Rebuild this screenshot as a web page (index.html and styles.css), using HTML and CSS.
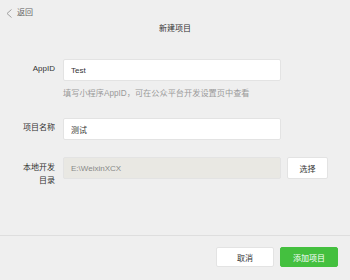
FILE: index.html
```html
<!DOCTYPE html>
<html lang="zh-CN">
<head>
    <meta charset="UTF-8">
    <meta name="viewport" content="width=device-width, initial-scale=1.0">
    <title>新建项目</title>
    <link rel="stylesheet" href="styles.css">
</head>
<body>
    <div class="page">
        <div class="main">
            <a class="back" href="#">
                <svg class="back-icon" width="6" height="9" viewBox="0 0 6 9">
                    <polyline points="5.5,0.5 1,4.5 5.5,8.5" fill="none" stroke="#a0a0a0" stroke-width="1"/>
                </svg>
                <span>返回</span>
            </a>

            <h1>新建项目</h1>

            <form class="form">
                <div class="row">
                    <label>AppID</label>
                    <input type="text" value="Test">
                </div>
                <p class="hint">填写小程序AppID，可在公众平台开发设置页中查看</p>

                <div class="row row-name">
                    <label>项目名称</label>
                    <input type="text" value="测试">
                </div>

                <div class="row row-dir">
                    <label>本地开发<br>目录</label>
                    <input type="text" value="E:\WeixinXCX" disabled>
                    <button type="button" class="btn pick">选择</button>
                </div>
            </form>
        </div>

        <div class="footer">
            <button type="button" class="btn">取消</button>
            <button type="button" class="btn primary">添加项目</button>
        </div>
    </div>
</body>
</html>
```

FILE: styles.css
```css
* {
    box-sizing: border-box;
    margin: 0;
    padding: 0;
}

body {
    font-family: "Liberation Sans", "Noto Sans CJK SC", sans-serif;
    font-size: 8px;
    color: #333;
    background: #efefef;
}

.page {
    width: 350px;
    height: 280px;
}

.main {
    height: 235px;
    padding-top: 5px;
}

.back {
    display: flex;
    align-items: center;
    gap: 5px;
    height: 16px;
    padding-left: 6px;
    color: #666;
    text-decoration: none;
    line-height: 16px;
}

.back-icon {
    display: block;
}

h1 {
    margin-top: 2px;
    font-size: 8px;
    font-weight: normal;
    line-height: 12px;
    text-align: center;
    color: #333;
}

.form {
    margin-top: 24px;
}

.row {
    display: grid;
    grid-template-columns: 55px 218px auto;
    column-gap: 8px;
    align-items: center;
}

.row label {
    text-align: right;
    line-height: 13px;
    color: #333;
    margin-top: -3px;
}

.row input {
    height: 22px;
    padding: 0 7px;
    border: 1px solid #e3e3e3;
    border-radius: 2px;
    background: #fff;
    font-family: inherit;
    font-size: 8px;
    color: #333;
    outline: none;
}

.row input:disabled {
    background: #e9e8e3;
    color: #888;
}

.hint {
    margin: 7px 0 0 63px;
    line-height: 12px;
    font-size: 8.2px;
    color: #9a9a9a;
}

.row-name {
    margin-top: 18px;
}

.row-dir {
    margin-top: 17px;
    align-items: start;
}

.row-dir label {
    margin-top: 4px;
}

.btn {
    height: 20px;
    border: 1px solid #e3e3e3;
    border-radius: 2px;
    background: #fff;
    font-family: inherit;
    font-size: 8px;
    color: #333;
    cursor: pointer;
}

.pick {
    width: 41px;
    height: 22px;
    margin-left: -2px;
}

.footer {
    display: flex;
    justify-content: flex-end;
    gap: 6px;
    padding: 11px 12px 0 0;
    border-top: 1px solid #dedede;
}

.footer .btn {
    width: 58px;
}

.primary {
    background: #44c03f;
    border-color: #44c03f;
    color: #fff;
}
```
